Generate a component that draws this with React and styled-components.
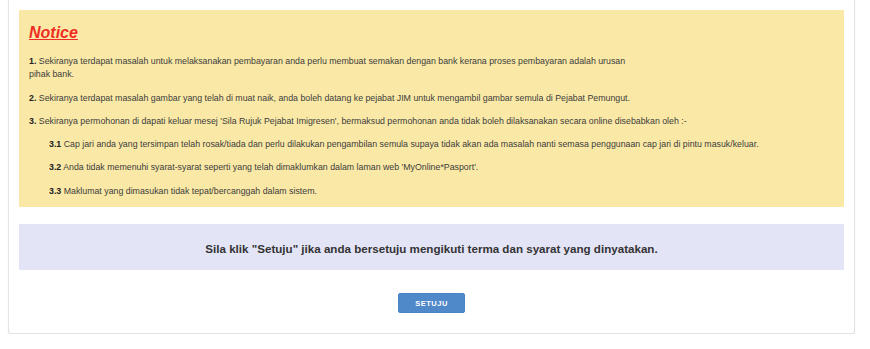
import styled, { createGlobalStyle } from 'styled-components';

const GlobalStyle = createGlobalStyle`
  html, body {
    margin: 0;
    padding: 0;
    background: #ffffff;
    font-family: "Liberation Sans", Arial, Helvetica, sans-serif;
  }
`;

const Page = styled.div`
  padding: 0 15px 0 8px;
`;

const Card = styled.div`
  margin-top: -3px;
  padding: 13px 10px 20px;
  background: #fff;
  border: 1px solid #e3e3e3;
  border-top: none;
  border-radius: 0 0 3px 3px;
  box-shadow: 0 1px 2px rgba(0, 0, 0, 0.06);
`;

const NoticeBox = styled.div`
  background: #fae9a6;
  padding: 13px 10px 1px;
`;

const Title = styled.h2`
  margin: 0 0 12px;
  font-size: 16px;
  line-height: 20px;
  font-weight: bold;
  font-style: italic;
  text-decoration: underline;
  color: #ee2e24;
`;

const Item = styled.p`
  margin: 0 0 10px;
  padding-left: ${(props) => (props.sub ? '20px' : '0')};
  font-size: 8.8px;
  line-height: 13.3px;
  color: #3c3c3c;

  &:last-child {
    margin-bottom: 8px;
  }
`;

const Num = styled.b`
  color: #222;
`;

const AgreeBox = styled.div`
  margin-top: 17px;
  background: #e4e4f7;
  padding: 18px 10px 14px;
  text-align: center;
  font-size: 11.6px;
  line-height: 14px;
  font-weight: bold;
  color: #333;
`;

const Actions = styled.div`
  display: flex;
  justify-content: center;
  margin-top: 23px;
`;

const Button = styled.button`
  width: 67px;
  height: 20px;
  padding: 0;
  border: 1px solid #4a84c4;
  border-radius: 2px;
  background: #5089c9;
  color: #fff;
  font-family: "Liberation Sans", Arial, sans-serif;
  font-size: 7.5px;
  font-weight: bold;
  letter-spacing: 0.5px;
  cursor: pointer;
`;

const App = () => {
  return (
    <Page>
      <GlobalStyle />
      <Card>
        <NoticeBox>
          <Title>Notice</Title>
          <Item>
            <Num>1.</Num> Sekiranya terdapat masalah untuk melaksanakan pembayaran anda perlu membuat semakan dengan bank kerana proses pembayaran adalah urusan
            <br />
            pihak bank.
          </Item>
          <Item>
            <Num>2.</Num> Sekiranya terdapat masalah gambar yang telah di muat naik, anda boleh datang ke pejabat JIM untuk mengambil gambar semula di Pejabat Pemungut.
          </Item>
          <Item>
            <Num>3.</Num> Sekiranya permohonan di dapati keluar mesej 'Sila Rujuk Pejabat Imigresen', bermaksud permohonan anda tidak boleh dilaksanakan secara online disebabkan oleh :-
          </Item>
          <Item sub>
            <Num>3.1</Num> Cap jari anda yang tersimpan telah rosak/tiada dan perlu dilakukan pengambilan semula supaya tidak akan ada masalah nanti semasa penggunaan cap jari di pintu masuk/keluar.
          </Item>
          <Item sub>
            <Num>3.2</Num> Anda tidak memenuhi syarat-syarat seperti yang telah dimaklumkan dalam laman web 'MyOnline*Pasport'.
          </Item>
          <Item sub>
            <Num>3.3</Num> Maklumat yang dimasukan tidak tepat/bercanggah dalam sistem.
          </Item>
        </NoticeBox>
        <AgreeBox>
          Sila klik "Setuju" jika anda bersetuju mengikuti terma dan syarat yang dinyatakan.
        </AgreeBox>
        <Actions>
          <Button>SETUJU</Button>
        </Actions>
      </Card>
    </Page>
  );
};

export default App;
